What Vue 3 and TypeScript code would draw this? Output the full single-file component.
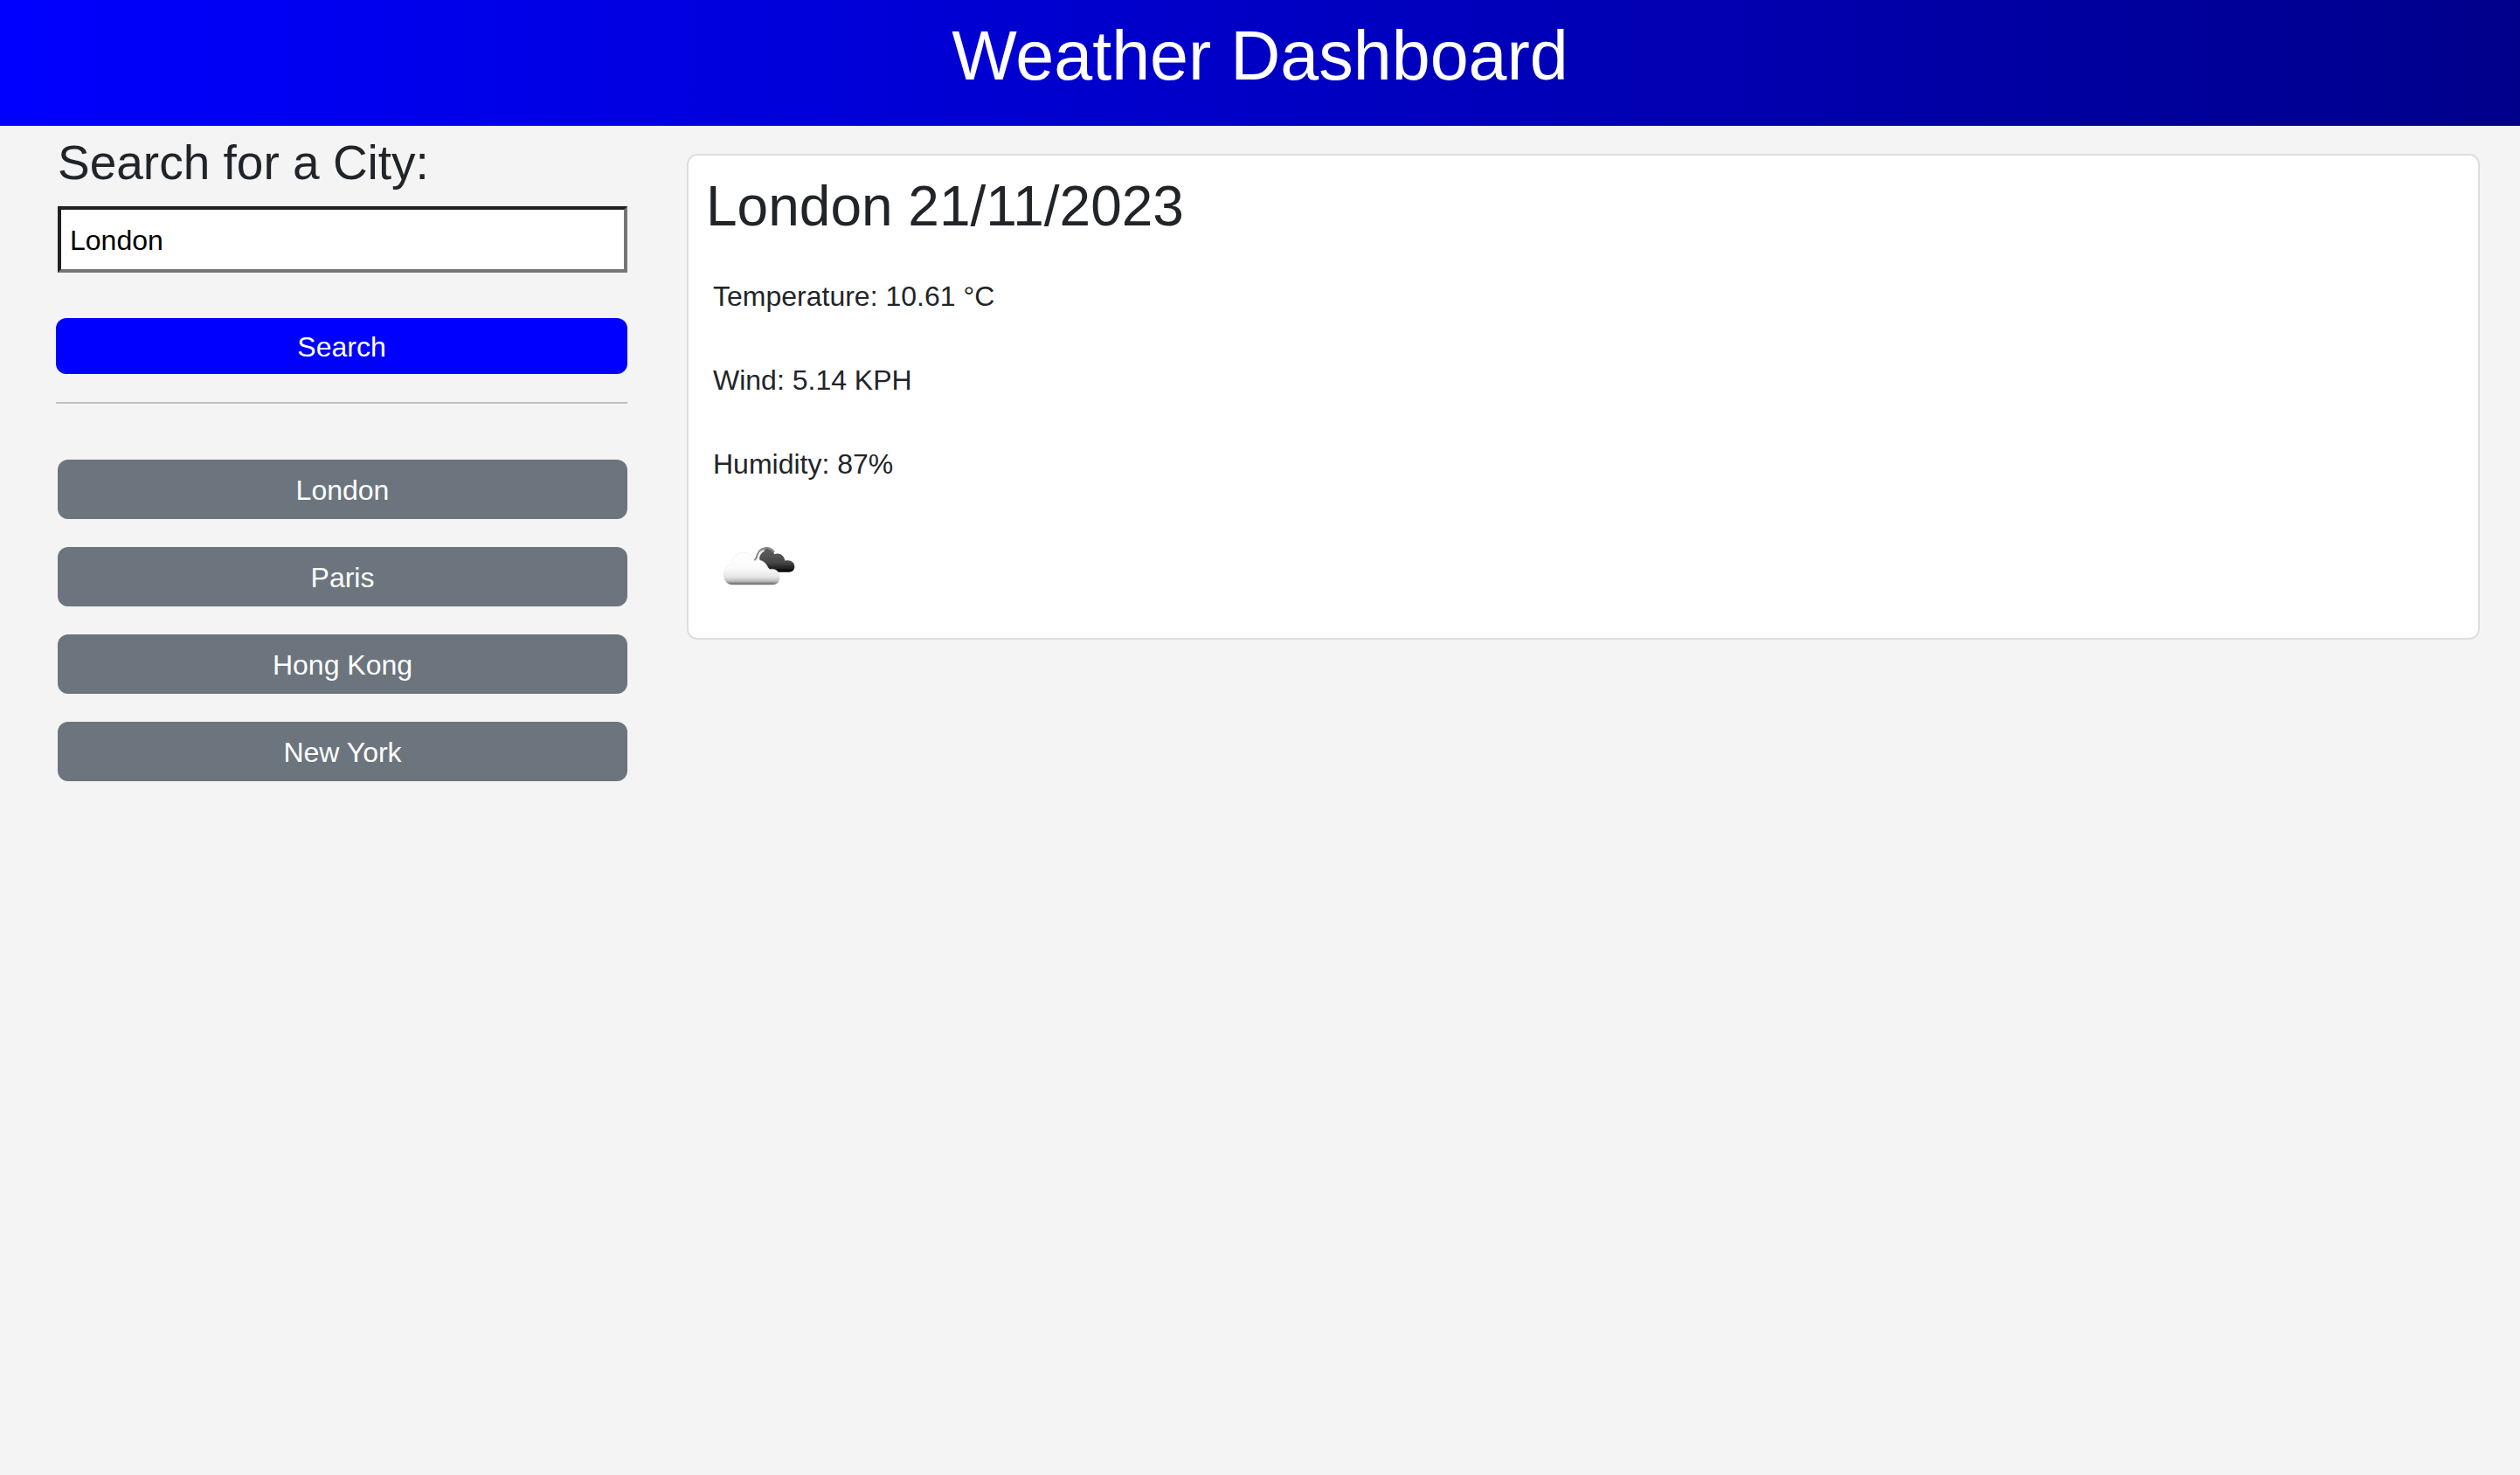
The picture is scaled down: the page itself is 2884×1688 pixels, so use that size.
<script setup lang="ts">
import { ref } from 'vue'

const query = ref('London')
const history = ['London', 'Paris', 'Hong Kong', 'New York']
const heading = 'London 21/11/2023'
const readings = ['Temperature: 10.61 °C', 'Wind: 5.14 KPH', 'Humidity: 87%']
</script>

<template>
  <div class="page">
    <header class="banner">
      <h1>Weather Dashboard</h1>
    </header>
    <main class="layout">
      <aside class="sidebar">
        <form class="search" @submit.prevent>
          <label for="city">Search for a City:</label>
          <input id="city" v-model="query" type="text" autocomplete="off" />
          <button type="submit">Search</button>
        </form>
        <hr />
        <div class="history">
          <button v-for="city in history" :key="city" type="button" @click="query = city">{{ city }}</button>
        </div>
      </aside>
      <section class="card">
        <h2>{{ heading }}</h2>
        <div class="readings">
          <p v-for="line in readings" :key="line">{{ line }}</p>
          <svg class="icon" viewBox="18 -36 300 300" role="img" aria-label="Broken clouds">
            <defs>
              <linearGradient id="front" gradientUnits="userSpaceOnUse" x1="0" y1="66" x2="0" y2="180">
                <stop offset="0" stop-color="#ffffff" />
                <stop offset="0.5" stop-color="#fafafa" />
                <stop offset="0.74" stop-color="#e6e6e6" />
                <stop offset="0.87" stop-color="#bcbcbc" />
                <stop offset="0.95" stop-color="#747474" />
                <stop offset="1" stop-color="#808080" />
              </linearGradient>
              <linearGradient id="back" gradientUnits="userSpaceOnUse" x1="0" y1="50" x2="0" y2="134">
                <stop offset="0" stop-color="#606060" />
                <stop offset="0.6" stop-color="#484848" />
                <stop offset="0.85" stop-color="#202020" />
                <stop offset="1" stop-color="#000000" />
              </linearGradient>
              <filter id="soft" x="-10%" y="-10%" width="120%" height="120%">
                <feGaussianBlur stdDeviation="1.8" />
              </filter>
            </defs>
            <g filter="url(#soft)">
              <path fill="url(#back)" d="M178 92C176 66 186 54 202 54C216 54 225 62 229 73C245 66 262 76 265 95C284 91 298 101 298 115C298 127 290 134 279 134H224L206 118Z" />
              <path fill="none" stroke="#858585" stroke-width="6" d="M158 94C168 90 168 82 170 74C176 58 190 50 204 51C216 52 223 57 228 66" />
              <path fill="none" stroke="#f4f4f4" stroke-width="5" d="M172 94C174 80 180 66 194 59" />
              <path fill="url(#front)" stroke="#dedede" stroke-opacity="0.35" stroke-width="3" d="M82 178C64 175 54 160 54 143C54 124 66 111 83 106C83 82 100 67 122 67C141 67 155 77 160 95C182 87 204 100 209 127C229 117 247 132 247 151C247 167 237 178 224 178Z" />
            </g>
          </svg>
        </div>
      </section>
    </main>
  </div>
</template>

<style>
body {
  background: #f4f4f4;
}
</style>

<style scoped>
.page {
  color: #212529;
  font-family: "Liberation Sans", Arial, sans-serif;
  font-size: 32px;
  line-height: 48px;
}

.banner {
  padding: 16px 16px 32px;
  background: linear-gradient(to right, #0000ff, #00008b);
  color: #fff;
  text-align: center;
}

h1,
h2,
p {
  margin: 0;
  font-weight: 400;
}

h1 {
  font-size: 79px;
  line-height: 96px;
}

.layout {
  display: flex;
  align-items: flex-start;
}

.sidebar {
  box-sizing: border-box;
  flex: 0 0 25%;
  padding: 8px 3px 0 64px;
}

.search {
  display: flex;
  flex-direction: column;
}

.search label {
  margin-left: 2px;
  font-size: 55px;
  line-height: 68px;
}

.search input {
  box-sizing: border-box;
  width: auto;
  height: 76px;
  margin: 16px 0 52px 2px;
  padding: 2px 10px 0;
  border: 4px solid;
  border-color: #212121 #767676 #767676 #212121;
  border-radius: 0;
  background: #fff;
  color: #000;
  font: inherit;
  outline: none;
}

button {
  padding: 9px 16px 7px;
  border: 0;
  border-radius: 12px;
  color: #fff;
  font: inherit;
  cursor: pointer;
}

.search button {
  background: #0000ff;
}

hr {
  height: 2px;
  margin: 32px 0 64px;
  border: 0;
  background: #c1c1c1;
}

.history {
  display: flex;
  flex-direction: column;
  gap: 32px;
  margin-left: 2px;
}

.history button {
  padding: 11px 16px 9px;
  background: #6c757d;
}

.card {
  box-sizing: border-box;
  flex: 1;
  margin: 32px 46px 0 65px;
  padding: 20px 20px 32px;
  border: 2px solid #dedede;
  border-radius: 12px;
  background: #fff;
}

h2 {
  font-size: 64px;
  line-height: 76px;
}

.readings {
  display: flex;
  flex-direction: column;
  gap: 48px;
  padding: 41px 8px 0;
}

.icon {
  display: block;
  width: 100px;
  height: 100px;
  margin-top: -5px;
}
</style>
